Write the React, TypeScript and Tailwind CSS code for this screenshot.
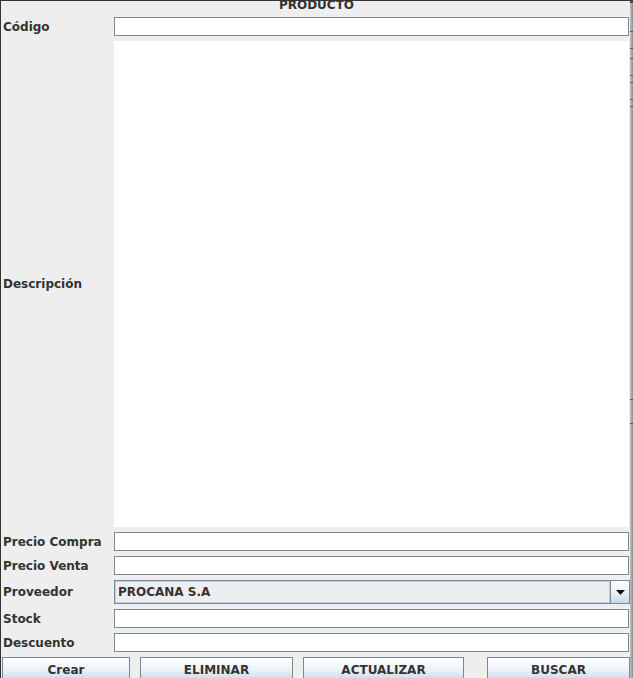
import React from "react";

const font = { fontFamily: '"DejaVu Sans", "Liberation Sans", sans-serif' };

const Field: React.FC = () => (
  <div className="w-[515px] h-[19px] bg-white border border-[#7a8a99] shrink-0" />
);

const Row: React.FC<{ label: string; children: React.ReactNode }> = ({ label, children }) => (
  <div className="flex items-center shrink-0">
    <div className="w-[113px] pl-[2px] text-[12px] font-bold text-[#333333] whitespace-nowrap">{label}</div>
    {children}
  </div>
);

// dark ticks on the gray strip behind the window (y offsets)
const marks = [31, 48, 58, 75, 82, 99, 106, 399, 423];

const App: React.FC = () => {
  const btn =
    "h-[25px] shrink-0 border border-[#7a8a99] bg-gradient-to-b from-white via-[#eef3f9] to-[#c4d7ea] text-[12px] font-bold text-[#333333] flex items-start justify-center pt-[3px]";

  return (
    <div className="w-[633px] h-[678px] overflow-hidden flex bg-[#a9a9a9]" style={font}>
      {/* window */}
      <div className="w-[630px] h-full bg-[#eeeeee] border-l border-t border-[#333333] flex flex-col gap-[5px] shrink-0 overflow-hidden">
        {/* title */}
        <div className="h-[11px] shrink-0 overflow-hidden flex justify-center">
          <span className="text-[12px] font-bold text-[#333333] leading-[12px] -mt-[2px] pl-[2px]">PRODUCTO</span>
        </div>

        <Row label="Código">
          <Field />
        </Row>

        <Row label="Descripción">
          <div className="w-[515px] h-[486px] bg-white shrink-0" />
        </Row>

        <Row label="Precio Compra">
          <Field />
        </Row>
        <Row label="Precio Venta">
          <Field />
        </Row>

        <Row label="Proveedor">
          <div className="w-[516px] h-[24px] border border-[#7a8a99] bg-[#eeeeee] flex shrink-0">
            <div className="flex-1 flex items-center pl-[2px] text-[12px] font-bold text-[#333333] border border-[#b8cfe5] bg-[#eeeeee]">
              PROCANA S.A
            </div>
            <div className="w-[19px] h-full border-l border-[#7a8a99] bg-gradient-to-b from-white via-[#eef3f9] to-[#c4d7ea] flex items-center justify-center">
              <svg width="9" height="5" viewBox="0 0 9 5">
                <path d="M0 0h9L4.5 5z" fill="#111" />
              </svg>
            </div>
          </div>
        </Row>

        <Row label="Stock">
          <Field />
        </Row>
        <Row label="Descuento">
          <Field />
        </Row>

        {/* buttons */}
        <div className="flex shrink-0">
          <div className={`${btn} w-[128px] ml-[1px]`}>Crear</div>
          <div className={`${btn} w-[153px] ml-[10px]`}>ELIMINAR</div>
          <div className={`${btn} w-[161px] ml-[10px]`}>ACTUALIZAR</div>
          <div className={`${btn} w-[143px] ml-[23px]`}>BUSCAR</div>
        </div>
      </div>

      {/* background strip to the right */}
      <div className="w-[3px] h-full bg-gradient-to-r from-[#c2c2c2] to-[#8e8e8e] flex flex-col border-t-[3px] border-[#444444]">
        {marks.map((y, i) => (
          <div
            key={i}
            className="w-full h-[1px] bg-[#505866] shrink-0"
            style={{ marginTop: i === 0 ? y - 3 : y - marks[i - 1] - 1 }}
          />
        ))}
      </div>
    </div>
  );
};

export default App;
